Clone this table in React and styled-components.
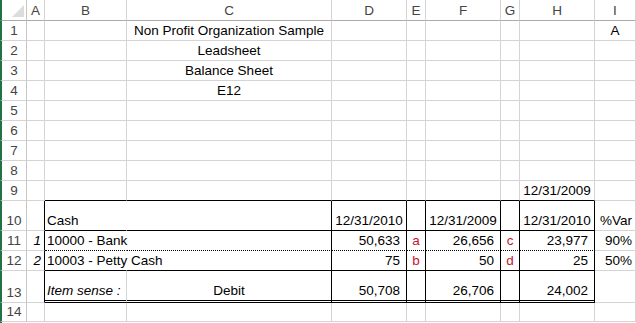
import styled, { createGlobalStyle, css } from 'styled-components';

const GRID = '#d4d4d4';
const INK = '#000';
const RED = '#c8102e';

const COLS = ['A', 'B', 'C', 'D', 'E', 'F', 'G', 'H', 'I'];
const WIDTHS = '27px 18px 82px 205px 75px 19px 75px 19px 75px 41px';

// cell spec: [text, options]
// options: r / b = right / bottom edge ('solid' | 'dot' | 'dbl' | 'none'), al = alignment
const box = (b) => ({ r: 'solid', b });
const rows = [
  { n: 1, cells: { C: ['Non Profit Organization Sample', { al: 'center' }], I: ['A', { al: 'center' }] } },
  { n: 2, cells: { C: ['Leadsheet', { al: 'center' }] } },
  { n: 3, cells: { C: ['Balance Sheet', { al: 'center' }] } },
  { n: 4, cells: { C: ['E12', { al: 'center' }] } },
  { n: 5, cells: {} },
  { n: 6, cells: {} },
  { n: 7, cells: {} },
  { n: 8, cells: {} },
  {
    n: 9,
    cells: {
      B: ['', { b: 'solid' }],
      C: ['', { b: 'solid' }],
      D: ['', { b: 'solid' }],
      E: ['', { b: 'solid' }],
      F: ['', { b: 'solid' }],
      G: ['', { b: 'solid' }],
      H: ['12/31/2009', { b: 'solid', al: 'center' }],
    },
  },
  {
    n: 10,
    h: 30,
    cells: {
      A: ['', { r: 'solid' }],
      B: ['Cash', { r: 'none', b: 'solid' }],
      C: ['', box('solid')],
      D: ['12/31/2010', { ...box('solid'), al: 'center' }],
      E: ['', box('solid')],
      F: ['12/31/2009', { ...box('solid'), al: 'center' }],
      G: ['', box('solid')],
      H: ['12/31/2010', { ...box('solid'), al: 'center' }],
      I: ['%Var', { al: 'right' }],
    },
  },
  {
    n: 11,
    cells: {
      A: ['1', { r: 'solid', al: 'right', it: true }],
      B: ['10000 - Bank', { r: 'none', b: 'dot' }],
      C: ['', box('dot')],
      D: ['50,633', { ...box('dot'), al: 'num' }],
      E: ['a', { ...box('dot'), al: 'center', red: true }],
      F: ['26,656', { ...box('dot'), al: 'num' }],
      G: ['c', { ...box('dot'), al: 'center', red: true }],
      H: ['23,977', { ...box('dot'), al: 'num' }],
      I: ['90%', { al: 'right' }],
    },
  },
  {
    n: 12,
    cells: {
      A: ['2', { r: 'solid', al: 'right', it: true }],
      B: ['10003 - Petty Cash', { r: 'none', b: 'solid' }],
      C: ['', box('solid')],
      D: ['75', { ...box('solid'), al: 'num' }],
      E: ['b', { ...box('solid'), al: 'center', red: true }],
      F: ['50', { ...box('solid'), al: 'num' }],
      G: ['d', { ...box('solid'), al: 'center', red: true }],
      H: ['25', { ...box('solid'), al: 'num' }],
      I: ['50%', { al: 'right' }],
    },
  },
  {
    n: 13,
    h: 32,
    cells: {
      A: ['', { r: 'solid' }],
      B: ['Item sense :', { b: 'dbl', it: true }],
      C: ['Debit', { ...box('dbl'), al: 'center' }],
      D: ['50,708', { ...box('dbl'), al: 'num' }],
      E: ['', box('dbl')],
      F: ['26,706', { ...box('dbl'), al: 'num' }],
      G: ['', box('dbl')],
      H: ['24,002', { ...box('dbl'), al: 'num' }],
    },
  },
  { n: 14, h: 19, cells: {} },
];

const GlobalStyle = createGlobalStyle`
  html, body {
    margin: 0;
    padding: 0;
    background: #fff;
    overflow: hidden;
  }
`;

const Sheet = styled.div`
  width: 636px;
  height: 323px;
  overflow: hidden;
  font-family: 'Liberation Sans', Arial, sans-serif;
  font-size: 13.5px;
  color: ${INK};
`;

const Row = styled.div`
  display: grid;
  grid-template-columns: ${WIDTHS};
  height: ${(p) => p.$h}px;
`;

const edge = (kind) => {
  switch (kind) {
    case 'solid':
      return `1px solid ${INK}`;
    case 'dot':
      return `1px dotted ${INK}`;
    case 'dbl':
      return `3px double ${INK}`;
    case 'none':
      return '1px solid transparent';
    default:
      return `1px solid ${GRID}`;
  }
};

const Cell = styled.div`
  box-sizing: border-box;
  display: flex;
  align-items: flex-end;
  min-width: 0;
  padding: 0 2px 1px;
  white-space: nowrap;
  line-height: 17px;
  border-right: ${(p) => edge(p.$r)};
  border-bottom: ${(p) => edge(p.$b)};
  justify-content: ${(p) =>
    p.$al === 'center' ? 'center' : p.$al === 'right' || p.$al === 'num' ? 'flex-end' : 'flex-start'};
  ${(p) => p.$al === 'num' && 'padding-right: 6px;'}
  ${(p) => p.$al === 'right' && 'padding-right: 3px;'}
  ${(p) => p.$it && 'font-style: italic;'}
  ${(p) => p.$red && css`color: ${RED};`}
  ${(p) => p.$span && 'overflow: visible; z-index: 1;'}
`;

const RowHead = styled.div`
  box-sizing: border-box;
  display: flex;
  align-items: flex-end;
  justify-content: center;
  padding-bottom: 1px;
  line-height: 17px;
  color: #444;
  border-left: 2px solid #217346;
  border-right: 1px solid #c6c6c6;
  border-bottom: 1px solid ${GRID};
`;

const ColHeadRow = styled(Row)`
  color: #444;
`;

const ColHead = styled.div`
  box-sizing: border-box;
  display: flex;
  align-items: center;
  justify-content: center;
  padding-top: 1px;
  border-right: 1px solid ${GRID};
  border-bottom: 1px solid #ababab;
`;

const Corner = styled(ColHead)`
  justify-content: flex-end;
  align-items: flex-end;
  padding: 0 2px 3px 0;
  border-left: 2px solid #217346;
  border-right-color: #c6c6c6;
`;

// the select-all triangle in the header corner
const SelectAll = () => (
  <svg width="12" height="12" viewBox="0 0 12 12">
    <polygon points="12,0 12,12 0,12" fill="#dcdcdc" />
  </svg>
);

// strip under the last row, where the left frame line continues
const Tail = styled.div`
  height: 3px;
  border-left: 2px solid #217346;
`;

const App = () => (
  <>
    <GlobalStyle />
    <Sheet>
      <ColHeadRow $h={21}>
        <Corner>
          <SelectAll />
        </Corner>
        {COLS.map((c) => (
          <ColHead key={c}>{c}</ColHead>
        ))}
      </ColHeadRow>
      {rows.map((row) => (
        <Row key={row.n} $h={row.h || 20}>
          <RowHead>{row.n}</RowHead>
          {COLS.map((c) => {
            const [text, o = {}] = row.cells[c] || [''];
            return (
              <Cell
                key={c}
                $r={o.r}
                $b={o.b}
                $al={o.al}
                $it={o.it}
                $red={o.red}
                $span={o.r === 'none'}
              >
                {text}
              </Cell>
            );
          })}
        </Row>
      ))}
      <Tail />
    </Sheet>
  </>
);

export default App;
